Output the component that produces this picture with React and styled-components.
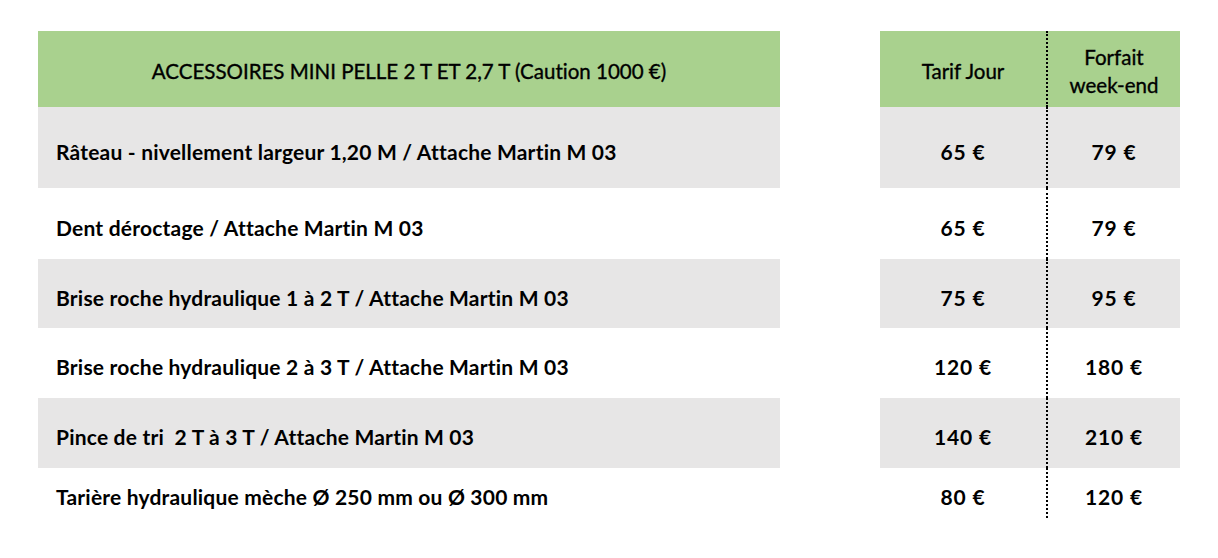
import React from "react";
import styled, { createGlobalStyle } from "styled-components";

const GlobalStyle = createGlobalStyle`
  body {
    margin: 0;
    background: #fff;
    font-family: Lato, "Open Sans", sans-serif;
    color: #000;
    font-variant-ligatures: none;
  }
`;

const rows = [
  { label: "Râteau - nivellement largeur 1,20 M / Attache Martin M 03", day: "65 €", weekend: "79 €", h: 81, grey: true },
  { label: "Dent déroctage / Attache Martin M 03", day: "65 €", weekend: "79 €", h: 71 },
  { label: "Brise roche hydraulique 1 à 2 T / Attache Martin M 03", day: "75 €", weekend: "95 €", h: 69, grey: true },
  { label: "Brise roche hydraulique 2 à 3 T / Attache Martin M 03", day: "120 €", weekend: "180 €", h: 70 },
  { label: "Pince de tri\u00a0 2 T à 3 T / Attache Martin M 03", day: "140 €", weekend: "210 €", h: 70, grey: true },
  { label: "Tarière hydraulique mèche Ø 250 mm ou Ø 300 mm", day: "80 €", weekend: "120 €", h: 50 },
];

const Sheet = styled.div`
  padding: 31px 0 0 38px;
  display: grid;
  grid-template-columns: 742px 100px 166px 134px;
`;

const Cell = styled.div`
  height: ${(p) => p.$h}px;
  background: ${(p) => (p.$head ? "#a9d18e" : p.$grey ? "#e7e6e6" : "transparent")};
  display: flex;
  align-items: center;
  justify-content: ${(p) => (p.$left ? "flex-start" : "center")};
  padding: ${(p) => (p.$left ? "8px 0 0 18px" : p.$head ? "4px 0 0" : "8px 0 0")};
  box-sizing: border-box;
  font-size: ${(p) => (p.$head ? 20.5 : 21)}px;
  font-weight: ${(p) => (p.$head ? 400 : 700)};
  letter-spacing: ${(p) => (p.$left ? 0.2 : p.$head ? 0 : 0.8)}px;
  text-align: center;
  line-height: 28px;
  white-space: pre;
  ${(p) => p.$head && "-webkit-text-stroke: 0.35px #000;"}
  ${(p) => p.$dotted && "border-left: 2px dotted #000;"}
`;

const Gap = styled.div`
  height: ${(p) => p.$h}px;
`;

export default function App() {
  return (
    <>
      <GlobalStyle />
      <Sheet>
        <Cell $head $h={76}>ACCESSOIRES MINI PELLE 2 T ET 2,7 T (Caution 1000 €)</Cell>
        <Gap $h={76} />
        <Cell $head $h={76}>Tarif Jour</Cell>
        <Cell $head $dotted $h={76}>{"Forfait\nweek-end"}</Cell>
        {rows.map((r, i) => (
          <React.Fragment key={i}>
            <Cell $left $grey={r.grey} $h={r.h}>{r.label}</Cell>
            <Gap $h={r.h} />
            <Cell $grey={r.grey} $h={r.h}>{r.day}</Cell>
            <Cell $grey={r.grey} $dotted $h={r.h}>{r.weekend}</Cell>
          </React.Fragment>
        ))}
      </Sheet>
    </>
  );
}
